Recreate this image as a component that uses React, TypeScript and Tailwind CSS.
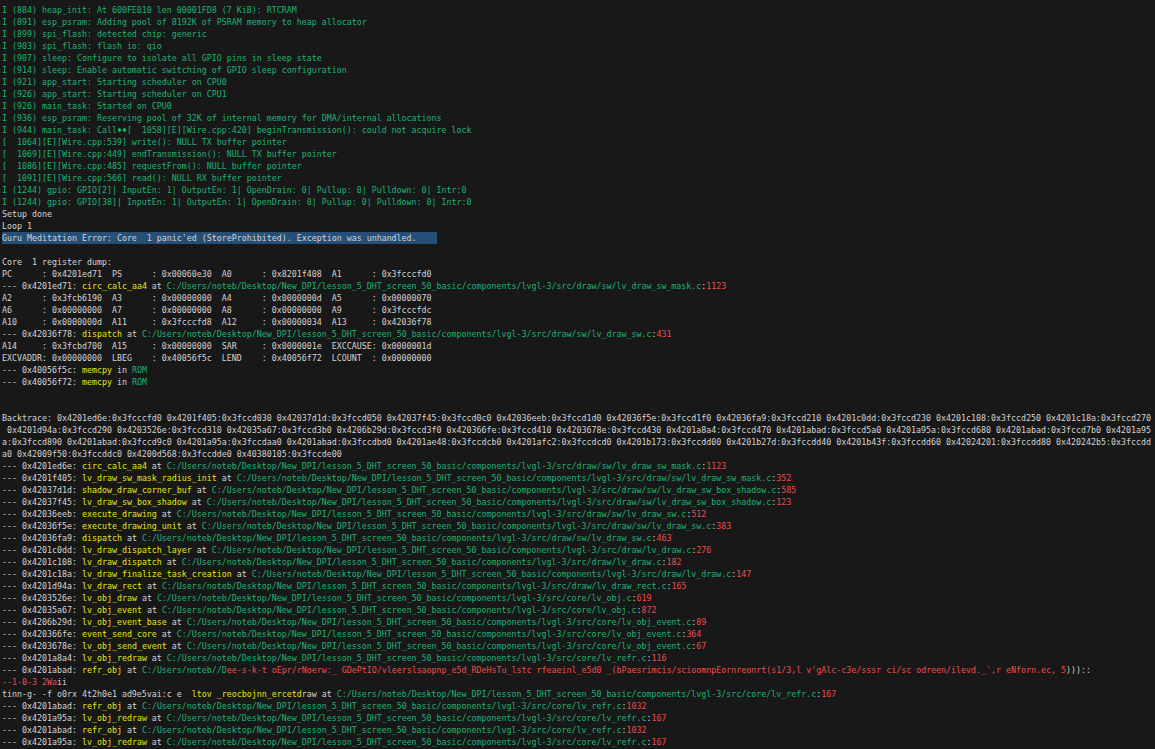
const PATH = "C:/Users/noteb/Desktop/New_DPI/lesson_5_DHT_screen_50_basic/components/lvgl-3/src/";

function Green({ children }: { children: React.ReactNode }) {
  return <div className="h-3 text-[#18b573]">{children}</div>;
}

function Plain({ children }: { children: React.ReactNode }) {
  return <div className="h-3 text-[#d4d4d4]">{children}</div>;
}

function Trace({ addr, fn, file, line }: { addr: string; fn: string; file: string; line: string }) {
  return (
    <div className="h-3 text-[#d4d4d4]">
      --- {addr}: <span className="text-[#e5e510]">{fn}</span> at <span className="text-[#18b573]">{PATH + file}</span>:
      <span className="text-[#f14c4c]">{line}</span>
    </div>
  );
}

function Rom({ addr }: { addr: string }) {
  return (
    <div className="h-3 text-[#d4d4d4]">
      --- {addr}: <span className="text-[#e5e510]">memcpy</span> in <span className="text-[#18b573]">ROM</span>
    </div>
  );
}

const boot = [
  "I (884) heap_init: At 600FE010 len 00001FD8 (7 KiB): RTCRAM",
  "I (891) esp_psram: Adding pool of 8192K of PSRAM memory to heap allocator",
  "I (899) spi_flash: detected chip: generic",
  "I (903) spi_flash: flash io: qio",
  "I (907) sleep: Configure to isolate all GPIO pins in sleep state",
  "I (914) sleep: Enable automatic switching of GPIO sleep configuration",
  "I (921) app_start: Starting scheduler on CPU0",
  "I (926) app_start: Starting scheduler on CPU1",
  "I (926) main_task: Started on CPU0",
  "I (936) esp_psram: Reserving pool of 32K of internal memory for DMA/internal allocations",
  "I (944) main_task: Call\u2666\u2666[  1058][E][Wire.cpp:420] beginTransmission(): could not acquire lock",
  "[  1064][E][Wire.cpp:539] write(): NULL TX buffer pointer",
  "[  1069][E][Wire.cpp:449] endTransmission(): NULL TX buffer pointer",
  "[  1086][E][Wire.cpp:485] requestFrom(): NULL buffer pointer",
  "[  1091][E][Wire.cpp:566] read(): NULL RX buffer pointer",
  "I (1244) gpio: GPIO[2]| InputEn: 1| OutputEn: 1| OpenDrain: 0| Pullup: 0| Pulldown: 0| Intr:0",
  "I (1244) gpio: GPIO[38]| InputEn: 1| OutputEn: 1| OpenDrain: 0| Pullup: 0| Pulldown: 0| Intr:0",
];

const backtrace = [
  "Backtrace: 0x4201ed6e:0x3fcccfd0 0x4201f405:0x3fccd030 0x42037d1d:0x3fccd050 0x42037f45:0x3fccd0c0 0x42036eeb:0x3fccd1d0 0x42036f5e:0x3fccd1f0 0x42036fa9:0x3fccd210 0x4201c0dd:0x3fccd230 0x4201c108:0x3fccd250 0x4201c18a:0x3fccd270",
  " 0x4201d94a:0x3fccd290 0x4203526e:0x3fccd310 0x42035a67:0x3fccd3b0 0x4206b29d:0x3fccd3f0 0x420366fe:0x3fccd410 0x4203678e:0x3fccd430 0x4201a8a4:0x3fccd470 0x4201abad:0x3fccd5a0 0x4201a95a:0x3fccd680 0x4201abad:0x3fccd7b0 0x4201a95",
  "a:0x3fccd890 0x4201abad:0x3fccd9c0 0x4201a95a:0x3fccdaa0 0x4201abad:0x3fccdbd0 0x4201ae48:0x3fccdcb0 0x4201afc2:0x3fccdcd0 0x4201b173:0x3fccdd00 0x4201b27d:0x3fccdd40 0x4201b43f:0x3fccdd60 0x42024201:0x3fccdd80 0x420242b5:0x3fccdd",
  "a0 0x42009f50:0x3fccddc0 0x4200d568:0x3fccdde0 0x40380105:0x3fccde00",
];

const frames = [
  ["0x4201ed6e", "circ_calc_aa4", "draw/sw/lv_draw_sw_mask.c", "1123"],
  ["0x4201f405", "lv_draw_sw_mask_radius_init", "draw/sw/lv_draw_sw_mask.c", "352"],
  ["0x42037d1d", "shadow_draw_corner_buf", "draw/sw/lv_draw_sw_box_shadow.c", "585"],
  ["0x42037f45", "lv_draw_sw_box_shadow", "draw/sw/lv_draw_sw_box_shadow.c", "123"],
  ["0x42036eeb", "execute_drawing", "draw/sw/lv_draw_sw.c", "512"],
  ["0x42036f5e", "execute_drawing_unit", "draw/sw/lv_draw_sw.c", "383"],
  ["0x42036fa9", "dispatch", "draw/sw/lv_draw_sw.c", "463"],
  ["0x4201c0dd", "lv_draw_dispatch_layer", "draw/lv_draw.c", "276"],
  ["0x4201c108", "lv_draw_dispatch", "draw/lv_draw.c", "182"],
  ["0x4201c18a", "lv_draw_finalize_task_creation", "draw/lv_draw.c", "147"],
  ["0x4201d94a", "lv_draw_rect", "draw/lv_draw_rect.c", "165"],
  ["0x4203526e", "lv_obj_draw", "core/lv_obj.c", "619"],
  ["0x42035a67", "lv_obj_event", "core/lv_obj.c", "872"],
  ["0x4206b29d", "lv_obj_event_base", "core/lv_obj_event.c", "89"],
  ["0x420366fe", "event_send_core", "core/lv_obj_event.c", "364"],
  ["0x4203678e", "lv_obj_send_event", "core/lv_obj_event.c", "67"],
  ["0x4201a8a4", "lv_obj_redraw", "core/lv_refr.c", "116"],
];

const tail = [
  ["0x4201abad", "refr_obj", "core/lv_refr.c", "1032"],
  ["0x4201a95a", "lv_obj_redraw", "core/lv_refr.c", "167"],
  ["0x4201abad", "refr_obj", "core/lv_refr.c", "1032"],
  ["0x4201a95a", "lv_obj_redraw", "core/lv_refr.c", "167"],
];

export default function App() {
  return (
    <div className="h-[749px] w-[1155px] overflow-hidden bg-[#181818] pt-1 pl-0.5 font-['DejaVu_Sans_Mono',monospace] text-[8.31px] leading-3 whitespace-pre">
      {boot.map((l) => (
        <Green key={l}>{l}</Green>
      ))}
      <Plain>Setup done</Plain>
      <Plain>Loop 1</Plain>
      <div className="h-3 w-[435px] bg-[#264f78] text-[#d4d4d4]">Guru Meditation Error: Core  1 panic'ed (StoreProhibited). Exception was unhandled.</div>
      <div className="h-3" />
      <Plain>Core  1 register dump:</Plain>
      <Plain>PC      : 0x4201ed71  PS      : 0x00060e30  A0      : 0x8201f408  A1      : 0x3fcccfd0</Plain>
      <Trace addr="0x4201ed71" fn="circ_calc_aa4" file="draw/sw/lv_draw_sw_mask.c" line="1123" />
      <Plain>A2      : 0x3fcb6190  A3      : 0x00000000  A4      : 0x0000000d  A5      : 0x00000070</Plain>
      <Plain>A6      : 0x00000000  A7      : 0x00000000  A8      : 0x00000000  A9      : 0x3fcccfdc</Plain>
      <Plain>A10     : 0x0000000d  A11     : 0x3fcccfd8  A12     : 0x00000034  A13     : 0x42036f78</Plain>
      <Trace addr="0x42036f78" fn="dispatch" file="draw/sw/lv_draw_sw.c" line="431" />
      <Plain>A14     : 0x3fcbd700  A15     : 0x00000000  SAR     : 0x0000001e  EXCCAUSE: 0x0000001d</Plain>
      <Plain>EXCVADDR: 0x00000000  LBEG    : 0x40056f5c  LEND    : 0x40056f72  LCOUNT  : 0x00000000</Plain>
      <Rom addr="0x40056f5c" />
      <Rom addr="0x40056f72" />
      <div className="h-3" />
      <div className="h-3" />
      {backtrace.map((l) => (
        <Plain key={l}>{l}</Plain>
      ))}
      {frames.map(([a, f, p, n]) => (
        <Trace key={a} addr={a} fn={f} file={p} line={n} />
      ))}
      <div className="h-3 text-[#d4d4d4]">
        --- 0x4201abad: <span className="text-[#e5e510]">refr_obj</span> at <span className="text-[#18b573]">C:/Users/noteb//D</span>
        <span className="text-[#f14c4c]">ee-s-k-t oEpr/rNoerw:_ GDePtIO/vleerslsaopnp_e5d_RDeHsTu_lstc rfeaeinl_e5d0 _(bPaesrimcis/scioomnpEornreonrt(s1/3,l v'gAlc-c3e/sssr ci/sc odreen/ilevd._',r eNforn.ec, 5</span>)))::
      </div>
      <div className="h-3 text-[#d4d4d4]">
        <span className="text-[#f14c4c]">--1-0-3 2Wa</span>ii
      </div>
      <div className="h-3 text-[#d4d4d4]">
        tinn-g- -f o0rx 4t2h0e1 ad9e5vai:c e  <span className="text-[#e5e510]">ltov _reocbojnn_ercetd</span>raw at <span className="text-[#18b573]">{PATH + "core/lv_refr.c"}</span>:
        <span className="text-[#f14c4c]">167</span>
      </div>
      {tail.map(([a, f, p, n], i) => (
        <Trace key={i} addr={a} fn={f} file={p} line={n} />
      ))}
    </div>
  );
}
